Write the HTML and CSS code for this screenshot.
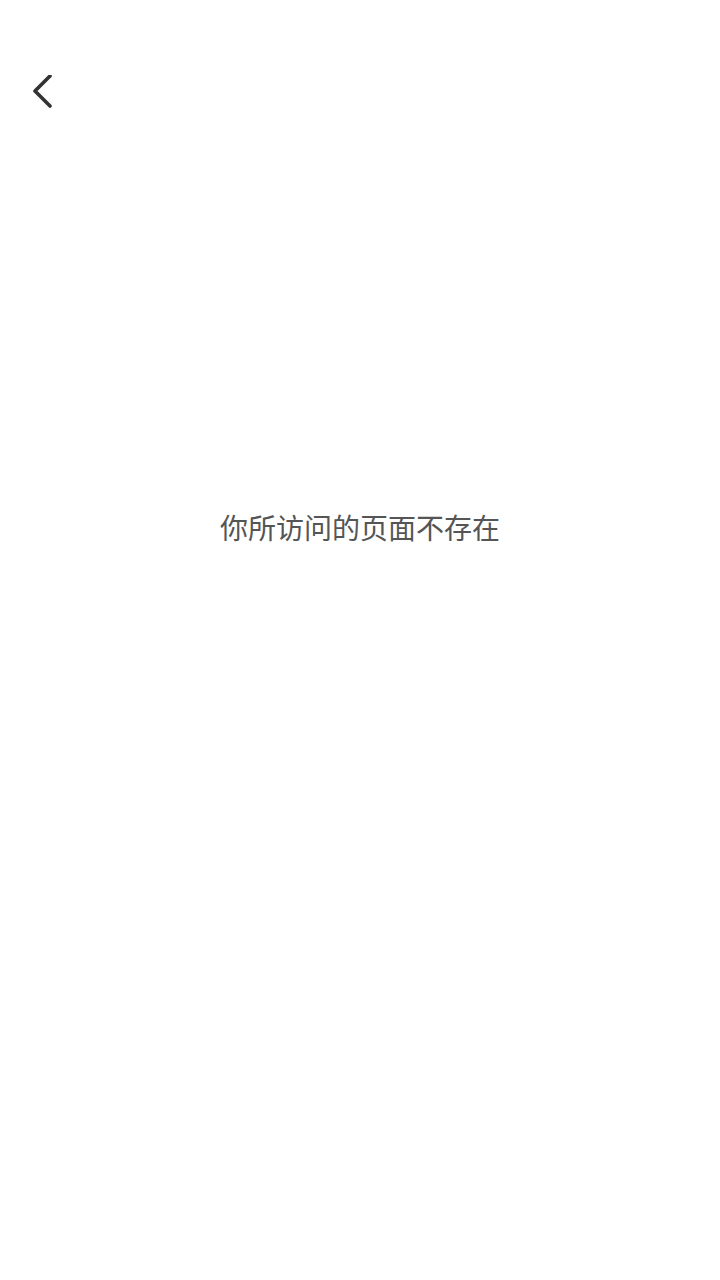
FILE: index.html
```html
<!DOCTYPE html>
<html lang="zh-CN">
<head>
<meta charset="utf-8">
<link rel="stylesheet" href="styles.css">
</head>
<body>
<div class="page">
  <header class="bar">
    <button class="back" aria-label="返回">
      <svg width="30" height="40" viewBox="0 0 30 40"><path d="M17 1 L2 16 L17 31" fill="none" stroke="#333" stroke-width="3.6" stroke-linecap="round" stroke-linejoin="round"/></svg>
    </button>
  </header>
  <main class="content">
    <p class="msg">你所访问的页面不存在</p>
  </main>
</div>
</body>
</html>
```
FILE: styles.css
```css
html, body { margin: 0; padding: 0; background: #fff; }
.page { width: 720px; height: 1280px; display: flex; flex-direction: column; }
.bar { height: 150px; padding: 75px 0 0 33px; box-sizing: border-box; }
.back { border: 0; background: none; padding: 0; display: block; cursor: pointer; }
.back svg { display: block; }
.content { height: 754px; display: flex; align-items: center; justify-content: center; }
.msg { margin: 0; font-family: "Noto Sans CJK SC", sans-serif; font-size: 28px; color: #555; line-height: 1; }
```
